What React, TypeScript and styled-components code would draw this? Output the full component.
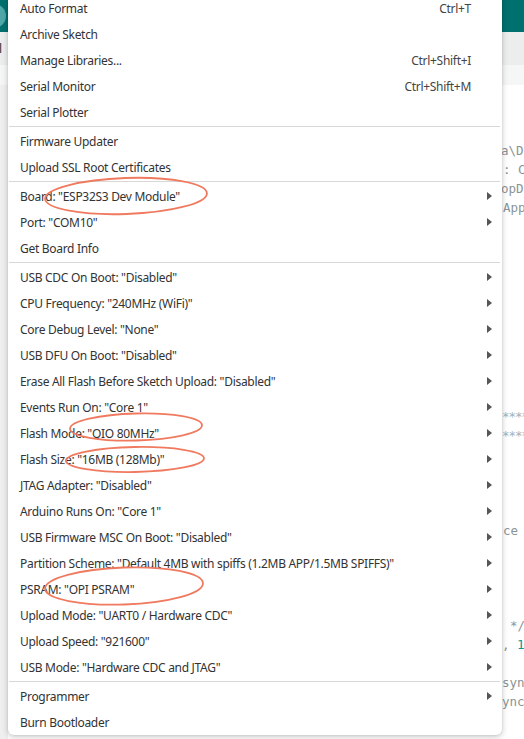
import React from "react";
import styled, { createGlobalStyle } from "styled-components";

const Global = createGlobalStyle`
  html, body { margin: 0; padding: 0; background: #fff; }
  body { width: 524px; height: 739px; overflow: hidden; }
  #root { width: 524px; height: 739px; }
`;

const Page = styled.div`
  position: relative;
  width: 524px;
  height: 739px;
  overflow: hidden;
  display: flex;
  flex-direction: column;
  font-family: "Noto Sans", "Open Sans", sans-serif;
`;

const TopBar = styled.div`
  height: 32px;
  background: #00706f;
  display: flex;
  align-items: center;
  flex-shrink: 0;
`;

const RoundButton = styled.div`
  width: 24px;
  height: 24px;
  border-radius: 50%;
  background: #4fa8a8;
  margin-left: -18px;
`;

const Toolbar = styled.div`
  height: 33px;
  background: #eceeee;
  display: flex;
  align-items: center;
  flex-shrink: 0;
  font-size: 12px;
  color: #333;
`;

const TabLabel = styled.span`
  margin-left: -6px;
`;

const Tabs = styled.div`
  height: 20px;
  background: #f5f6f6;
  flex-shrink: 0;
`;

const Editor = styled.div`
  flex: 1;
  display: flex;
  background: #fff;
`;

const Gutter = styled.div`
  width: 8px;
  background: #efefef;
  flex-shrink: 0;
`;

const Code = styled.div`
  flex: 1;
  padding-top: 56px;
  display: flex;
  flex-direction: column;
  font-family: "DejaVu Sans Mono", "Liberation Mono", monospace;
  font-size: 12.5px;
  color: #8a9496;
`;

const CodeLine = styled.div<{ $indent: number }>`
  height: 19px;
  line-height: 19px;
  padding-left: ${(p) => p.$indent}px;
  white-space: pre;
`;

const Num = styled.span`
  color: #00979d;
`;

const Stars = styled.span`
  color: #9fb2bc;
  letter-spacing: -1px;
`;

const Menu = styled.div`
  position: absolute;
  top: -5px;
  left: 8px;
  width: 494px;
  background: #fff;
  border-radius: 0 0 6px 6px;
  box-shadow: 0 2px 6px rgba(0, 0, 0, 0.22), 0 0 2px rgba(0, 0, 0, 0.12);
  font-family: "Noto Sans", "Open Sans", sans-serif;
  font-size: 12px;
  letter-spacing: -0.3px;
  color: #333;
`;

const Item = styled.div`
  height: 26px;
  display: flex;
  align-items: center;
  padding: 0 10px 0 12px;
`;

const Label = styled.span`
  flex: 1;
  white-space: nowrap;
`;

const Shortcut = styled.span`
  color: #444;
  margin-right: 21px;
  white-space: nowrap;
`;

const Arrow = styled.span`
  width: 0;
  height: 0;
  border-top: 4px solid transparent;
  border-bottom: 4px solid transparent;
  border-left: 5px solid #555;
`;

const Separator = styled.div`
  height: 1px;
  background: #d8d8d8;
  margin: 1px 2px 1px 1px;
`;

const Annotations = styled.svg`
  position: absolute;
  left: 0;
  top: 0;
  pointer-events: none;
`;

type Entry = { label: string; shortcut?: string; sub?: boolean };

const groups: Entry[][] = [
  [
    { label: "Auto Format", shortcut: "Ctrl+T" },
    { label: "Archive Sketch" },
    { label: "Manage Libraries...", shortcut: "Ctrl+Shift+I" },
    { label: "Serial Monitor", shortcut: "Ctrl+Shift+M" },
    { label: "Serial Plotter" },
  ],
  [{ label: "Firmware Updater" }, { label: "Upload SSL Root Certificates" }],
  [
    { label: 'Board: "ESP32S3 Dev Module"', sub: true },
    { label: 'Port: "COM10"', sub: true },
    { label: "Get Board Info" },
  ],
  [
    { label: 'USB CDC On Boot: "Disabled"', sub: true },
    { label: 'CPU Frequency: "240MHz (WiFi)"', sub: true },
    { label: 'Core Debug Level: "None"', sub: true },
    { label: 'USB DFU On Boot: "Disabled"', sub: true },
    { label: 'Erase All Flash Before Sketch Upload: "Disabled"', sub: true },
    { label: 'Events Run On: "Core 1"', sub: true },
    { label: 'Flash Mode: "QIO 80MHz"', sub: true },
    { label: 'Flash Size: "16MB (128Mb)"', sub: true },
    { label: 'JTAG Adapter: "Disabled"', sub: true },
    { label: 'Arduino Runs On: "Core 1"', sub: true },
    { label: 'USB Firmware MSC On Boot: "Disabled"', sub: true },
    {
      label: 'Partition Scheme: "Default 4MB with spiffs (1.2MB APP/1.5MB SPIFFS)"',
      sub: true,
    },
    { label: 'PSRAM: "OPI PSRAM"', sub: true },
    { label: 'Upload Mode: "UART0 / Hardware CDC"', sub: true },
    { label: 'Upload Speed: "921600"', sub: true },
    { label: 'USB Mode: "Hardware CDC and JTAG"', sub: true },
  ],
  [{ label: "Programmer", sub: true }, { label: "Burn Bootloader" }],
];

const blank = (n: number) =>
  Array.from({ length: n }, () => ({ indent: 0, content: "" as React.ReactNode }));

const codeLines: { indent: number; content: React.ReactNode }[] = [
  { indent: 493, content: "a\\D" },
  { indent: 495, content: ": C" },
  { indent: 493, content: "opD" },
  { indent: 495, content: "App" },
  ...blank(10),
  { indent: 494, content: <Stars>*****</Stars> },
  { indent: 494, content: <Stars>*****</Stars> },
  ...blank(4),
  { indent: 495, content: "ce" },
  ...blank(4),
  { indent: 502, content: "*/" },
  {
    indent: 494,
    content: (
      <>
        {", "}
        <Num>1</Num>
      </>
    ),
  },
  ...blank(1),
  { indent: 494, content: "syn" },
  { indent: 494, content: "ync" },
];

export default function App() {
  return (
    <>
      <Global />
      <Page>
        <TopBar>
          <RoundButton />
        </TopBar>
        <Toolbar>
          <TabLabel>rl</TabLabel>
        </Toolbar>
        <Tabs />
        <Editor>
          <Gutter />
          <Code>
            {codeLines.map((l, i) => (
              <CodeLine key={i} $indent={l.indent}>
                {l.content}
              </CodeLine>
            ))}
          </Code>
        </Editor>

        <Menu>
          {groups.map((g, gi) => (
            <React.Fragment key={gi}>
              {gi > 0 && <Separator />}
              {g.map((e) => (
                <Item key={e.label}>
                  <Label>{e.label}</Label>
                  {e.shortcut && <Shortcut>{e.shortcut}</Shortcut>}
                  {e.sub && <Arrow />}
                </Item>
              ))}
            </React.Fragment>
          ))}
        </Menu>

        <Annotations width="524" height="739" viewBox="0 0 524 739">
          <g fill="none" stroke="#f07a5f" strokeWidth="1.8">
            <ellipse cx="126" cy="196" rx="81" ry="18" transform="rotate(-2 126 196)" />
            <ellipse cx="136" cy="427" rx="66" ry="13.5" transform="rotate(-1.5 136 427)" />
            <ellipse cx="135" cy="459.5" rx="69" ry="12.5" transform="rotate(-1 135 459.5)" />
            <ellipse cx="124" cy="586" rx="79" ry="18.5" transform="rotate(-2 124 586)" />
          </g>
        </Annotations>
      </Page>
    </>
  );
}
